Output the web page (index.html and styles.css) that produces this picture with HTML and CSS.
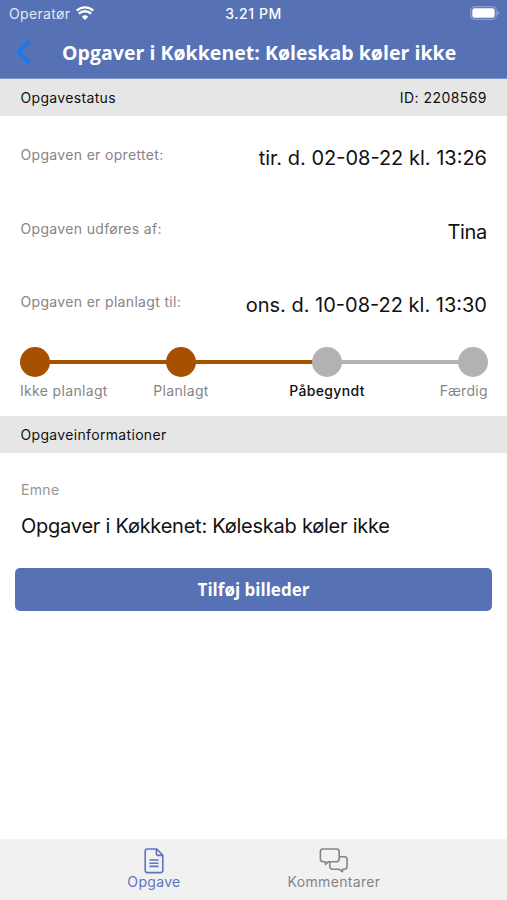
FILE: index.html
```html
<!DOCTYPE html>
<html lang="da">
<head>
<meta charset="utf-8">
<title>Opgave</title>
<link rel="stylesheet" href="styles.css">
</head>
<body>
<div class="app">
  <header class="header">
    <div class="status">
      <div class="carrier"><span class="carrier-name">Operatør</span>
        <svg class="wifi" width="18" height="14" viewBox="0 0 18 14" fill="#fff"><path d="M9 14 5.8 10.7a4.8 4.8 0 0 1 6.4 0z"/><path d="M2.9 7.6a9 9 0 0 1 12.2 0" fill="none" stroke="#fff" stroke-width="2.4"/><path d="M.8 4.6a12 12 0 0 1 16.400 0" fill="none" stroke="#fff" stroke-width="2.3"/></svg>
      </div>
      <span class="clock">3.21 PM</span>
      <svg class="battery" width="30" height="14" viewBox="0 0 30 14"><rect x=".7" y=".7" width="25.6" height="12.6" rx="3.8" fill="none" stroke="#8c9fd0" stroke-width="1.2"/><rect x="2.3" y="2.3" width="22.4" height="9.4" rx="2.300" fill="#fff"/><path d="M27.4 4.8q2 .6 2 2.200t-2 2.200z" fill="#8c9fd0"/></svg>
    </div>
    <div class="nav">
      <svg class="back" width="16" height="24" viewBox="0 0 16 24" fill="none" stroke="#0a7aff" stroke-width="2.8"><path d="M13.6 1.2 2.4 12l11.2 10.8"/></svg>
      <h1 class="title">Opgaver i Køkkenet: Køleskab køler ikke</h1>
    </div>
  </header>
  <main class="content">
    <div class="section"><span>Opgavestatus</span><span class="task-id">ID: 2208569</span></div>
    <dl class="rows">
      <div class="row"><dt>Opgaven er oprettet:</dt><dd>tir. d. 02-08-22 kl. 13:26</dd></div>
      <div class="row"><dt>Opgaven udføres af:</dt><dd class="name">Tina</dd></div>
      <div class="row"><dt>Opgaven er planlagt til:</dt><dd>ons. d. 10-08-22 kl. 13:30</dd></div>
    </dl>
    <div class="stepper">
      <i class="dot done"></i><i class="line done"></i><i class="dot done"></i><i class="line done"></i><i class="dot"></i><i class="line"></i><i class="dot"></i>
    </div>
    <div class="steps"><span>Ikke planlagt</span><span>Planlagt</span><span class="current">Påbegyndt</span><span>Færdig</span></div>
    <div class="section"><span>Opgaveinformationer</span></div>
    <div class="subject"><div class="label">Emne</div><div class="text">Opgaver i Køkkenet: Køleskab køler ikke</div></div>
    <button class="button">Tilføj billeder</button>
  </main>
  <nav class="tabs">
    <a class="tab active"><svg width="20" height="26" viewBox="0 0 20 26" fill="none" stroke="currentColor" stroke-width="1.6"><path d="M12.6 1H3.2A2 2 0 0 0 1.2 3v19.6a2 2 0 0 0 2 2h13.6a2 2 0 0 0 2-2V7.2z"/><path d="M12.4 1v4.400a2 2 0 0 0 2 2h4.400M5.500 12h9M5.500 15.200h9M5.500 18.400h9"/></svg><span>Opgave</span></a>
    <a class="tab"><svg width="30" height="26" viewBox="0 0 30 26" fill="none" stroke="currentColor" stroke-width="1.600" stroke-linejoin="round"><path d="M10.500 13.700H9.500L6.500 16.300v-2.600H4a2.600 2.600 0 0 1-2.600-2.600V3.600A2.600 2.600 0 0 1 4 1h13.600a2.600 2.600 0 0 1 2.600 2.600v7.500a2.600 2.600 0 0 1-2.600 2.600z"/><path d="M20.500 8.800h5a2.600 2.600 0 0 1 2.600 2.600v7.200a2.600 2.600 0 0 1-2.600 2.600h-2v2.600l-3.600-2.600h-6.500a2.600 2.600 0 0 1-2.600-2.600v-4.700"/></svg><span>Kommentarer</span></a>
  </nav>
</div>
</body>
</html>
```
FILE: styles.css
```css
* { box-sizing: border-box; }
body { margin: 0; background: #fff; font-family: Inter, "Liberation Sans", sans-serif; font-size: 14px; letter-spacing: .33px; color: #111; }
.app { display: flex; flex-direction: column; width: 507px; height: 900px; overflow: hidden; }
.header { height: 79px; background: #5671b4; color: #fff; border-bottom: 1px solid #8093c8; }
.status { display: grid; grid-template-columns: 1fr auto 1fr; align-items: center; height: 27px; padding: 0 7px 0 9px; }
.carrier { display: flex; align-items: center; gap: 6px; }
.carrier-name { color: #e3e8f5; }
.wifi { margin-top: -2px; }
.clock { margin-left: -2px; font-weight: 500; letter-spacing: .55px; }
.battery { justify-self: end; margin-top: -1px; }
.nav { display: flex; align-items: center; height: 51px; padding-left: 16px; }
.back { margin-top: -2px; }
.title { margin: 0 0 0 30px; font: 700 19.5px/26px "Open Sans", "Noto Sans", sans-serif; letter-spacing: .03px; white-space: nowrap; }
.content { flex: 1; }
.section { display: flex; justify-content: space-between; align-items: center; height: 37px; padding: 0 20px 0 20.5px; background: #e6e6e6; }
.task-id { letter-spacing: .45px; }
.rows { margin: 0; padding: 28px 20px 0 20.5px; }
.row { display: flex; justify-content: space-between; height: 73.7px; }
dt { color: #858585; line-height: 21px; }
dd { margin: 0; font-size: 20px; line-height: 28px; letter-spacing: 0; white-space: nowrap; }
.name { letter-spacing: -.3px; }
.stepper { display: flex; align-items: center; margin: -18px 19px 0 20px; height: 30px; }
.dot { width: 30px; height: 30px; border-radius: 50%; background: #b2b2b2; flex: none; }
.line { flex: 1; height: 4px; margin: 0 -1px; background: #b2b2b2; }
.dot.done, .line.done { background: #a55100; }
.steps { display: grid; grid-template-columns: 88px 146px 146px 88px; margin: 4px 19px 0 20px; height: 35px; line-height: 20px; color: #858585; text-align: center; }
.steps span:first-child { text-align: left; }
.steps span:last-child { text-align: right; }
.steps .current { color: #111; font-weight: 500; }
.subject { padding: 27px 21px 0; }
.label { color: #959595; line-height: 20px; }
.text { margin-top: 12px; font-size: 20px; line-height: 28px; letter-spacing: -.24px; white-space: nowrap; }
.button { display: block; width: 477px; height: 43px; margin: 28px 0 0 15px; padding: 0; border: 0; border-radius: 5px; background: #5671b4; color: #fff; font: 700 17px/24px "Open Sans", "Noto Sans", sans-serif; }
.tabs { display: flex; height: 61px; padding-left: 64px; background: #f1f1f1; }
.tab { display: flex; flex-direction: column; align-items: center; width: 180px; padding-top: 9px; color: #858585; }
.tab span { line-height: 16px; }
.tab.active { color: #5f74c0; }
```
